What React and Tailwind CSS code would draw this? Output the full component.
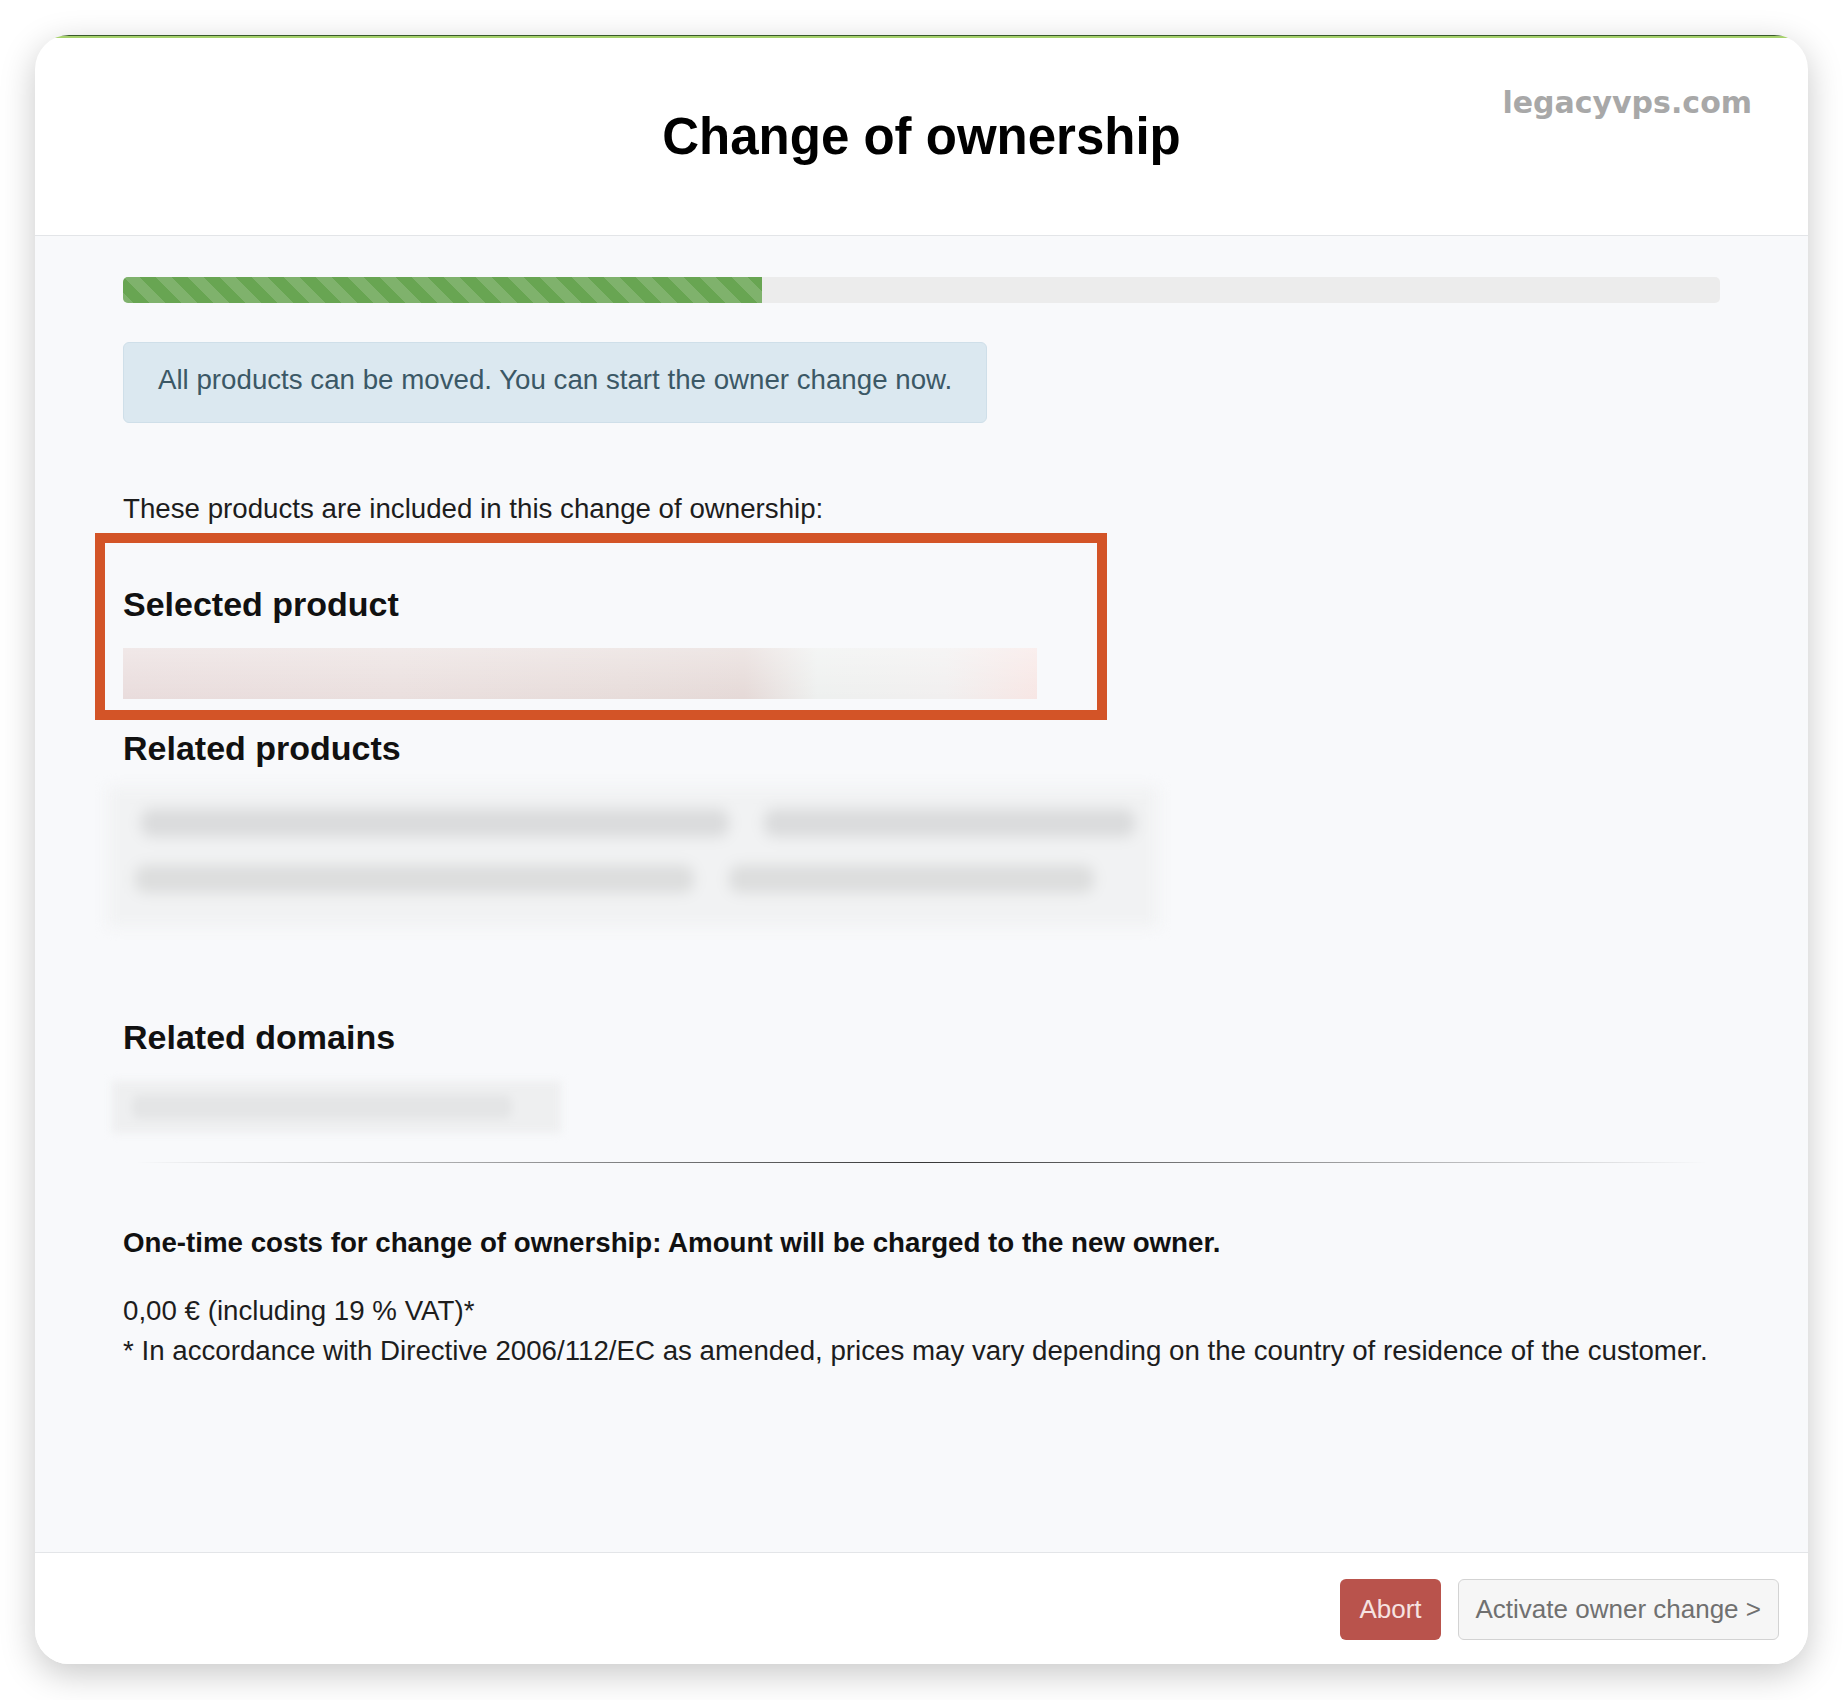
export default function App() {
  return (
    <div className="w-[1844px] h-[1700px] bg-white pt-[35px] pl-[35px] font-['Liberation_Sans',Arial,sans-serif]">
      <div className="w-[1773px] h-[1629px] rounded-[34px] overflow-hidden bg-white shadow-[0_10px_35px_rgba(0,0,0,0.22)] flex flex-col">
        {/* green top line */}
        <div className="h-[3px] flex flex-col shrink-0">
          <div className="h-px bg-[#3a5a2c]" />
          <div className="h-[2px] bg-[#a6d16c]" />
        </div>

        {/* header */}
        <div className="relative h-[198px] shrink-0 border-b border-[#e3e5e8] flex items-center justify-center">
          <h1 className="text-[51px] leading-none font-bold text-black">Change of ownership</h1>
          <div className="absolute top-[50px] right-[56px] text-[30px] leading-none font-bold text-[#a8a8a8] font-['DejaVu_Sans',sans-serif]">
            legacyvps.com
          </div>
        </div>

        {/* body */}
        <div className="flex-1 bg-[#f8f9fb] px-[88px] pt-[41px] text-[#1d1d1d]">
          {/* progress */}
          <div className="h-[26px] rounded-[5px] bg-[#ececec] overflow-hidden flex">
            <div className="w-[40%] h-full bg-[#68a552] bg-[linear-gradient(45deg,rgba(255,255,255,.15)_25%,transparent_25%,transparent_50%,rgba(255,255,255,.15)_50%,rgba(255,255,255,.15)_75%,transparent_75%,transparent)] bg-[length:32px_32px]" />
          </div>

          {/* alert */}
          <div className="mt-[39px] w-fit rounded-[6px] border border-[#cfdfe9] bg-[#dbe8f0] px-[34px] pt-[16px] pb-[22px] text-[27.7px] leading-[41px] text-[#3b5866]">
            All products can be moved. You can start the owner change now.
          </div>

          <p className="mt-[66px] text-[27.7px] leading-[40px]">These products are included in this change of ownership:</p>

          {/* selected product */}
          <div className="relative">
            <div className="absolute left-[-28px] top-[4px] w-[1012px] h-[187px] border-[10px] border-[#d35427] pointer-events-none" />
            <h4 className="pt-[55px] text-[34px] leading-[40px] font-bold text-[#111]">Selected product</h4>
            <div className="relative mt-[24px] w-[914px] h-[51px] overflow-hidden bg-[linear-gradient(90deg,#e9dcdc_0%,#eadfde_30%,#e7dcda_55%,#e5d9d7_68%,#eef0ef_76%,#f1efef_90%,#f7e6e4_100%)]">
              <div className="absolute inset-0 bg-[linear-gradient(180deg,rgba(255,255,255,0.35),rgba(255,255,255,0))]" />
            </div>
          </div>

          <h4 className="mt-[29px] text-[34px] leading-[40px] font-bold text-[#111]">Related products</h4>
          <div className="mt-[19px] -ml-[15px] w-[1050px] h-[140px] bg-[#f1f2f3] blur-[7px] flex flex-col gap-[28px] pt-[22px]">
            <div className="flex gap-[35px] pl-[33px]">
              <div className="w-[588px] h-[28px] rounded-[10px] bg-[#dadbdc]" />
              <div className="w-[371px] h-[28px] rounded-[10px] bg-[#dadbdc]" />
            </div>
            <div className="flex gap-[35px] pl-[27px]">
              <div className="w-[559px] h-[28px] rounded-[10px] bg-[#dcdddd]" />
              <div className="w-[365px] h-[28px] rounded-[10px] bg-[#dcdddd]" />
            </div>
          </div>

          <h4 className="mt-[90px] text-[34px] leading-[40px] font-bold text-[#111]">Related domains</h4>
          <div className="mt-[24px] -ml-[11px] w-[449px] h-[52px] bg-[#eeeff0] blur-[4px] flex items-center px-[20px]">
            <div className="w-[380px] h-[24px] rounded-[8px] bg-[#e4e5e6]" />
          </div>

          <div className="mt-[29px] mx-[12px] h-px bg-[linear-gradient(to_right,rgba(0,0,0,0),rgba(0,0,0,0.78),rgba(0,0,0,0))]" />

          <p className="mt-[60px] text-[27.7px] leading-[40px] font-bold text-[#111]">
            One-time costs for change of ownership: Amount will be charged to the new owner.
          </p>
          <p className="mt-[28px] text-[27.7px] leading-[40px]">0,00 € (including 19 % VAT)*</p>
          <p className="text-[27.7px] leading-[40px]">
            * In accordance with Directive 2006/112/EC as amended, prices may vary depending on the country of residence of the customer.
          </p>
        </div>

        {/* footer */}
        <div className="h-[112px] shrink-0 border-t border-[#e3e5e8] bg-white flex justify-end items-start pt-[26px] pr-[29px] gap-[17px]">
          <button className="h-[61px] px-[19px] rounded-[6px] bg-[#b9534c] text-[26px] text-[#f6e3e1]">Abort</button>
          <button className="h-[61px] px-[17px] rounded-[6px] border border-[#d3d3d3] bg-[#f6f6f6] text-[26px] text-[#707070]">
            Activate owner change &gt;
          </button>
        </div>
      </div>
    </div>
  );
}
